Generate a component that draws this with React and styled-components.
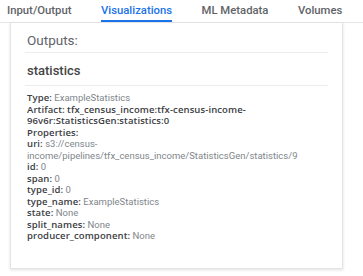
import React from "react";
import styled, { createGlobalStyle } from "styled-components";

const Global = createGlobalStyle`
  html, body { margin: 0; padding: 0; background: #fff; }
  body { font-family: Roboto, "Noto Sans", sans-serif; -webkit-font-smoothing: antialiased; }
`;

const Page = styled.div`
  width: 363px;
  height: 276px;
  overflow: hidden;
  background: #fff;
`;

const TabBar = styled.div`
  display: flex;
  gap: 29.5px;
  padding-left: 7px;
  height: 23px;
  box-sizing: border-box;
  border-bottom: 1px solid #e6e6e6;
`;

const Tab = styled.div`
  display: flex;
  align-items: center;
  height: 22px;
  box-sizing: border-box;
  padding-top: 1px;
  font-size: 11.3px;
  font-weight: 500;
  color: ${(p) => (p.$active ? "#1a73e8" : "#5f6368")};
  border-bottom: 2px solid ${(p) => (p.$active ? "#1a73e8" : "transparent")};
  white-space: nowrap;
`;

const Card = styled.div`
  margin: 0 20px 0 10px;
  height: 246px;
  box-sizing: border-box;
  border: 1px solid #e4e4e4;
  border-top: none;
  box-shadow: 0 1px 3px rgba(0, 0, 0, 0.12);
  padding: 0 14px;
`;

const Heading = styled.div`
  font-size: ${(p) => (p.$strong ? "13px" : "13.5px")};
  font-weight: ${(p) => (p.$strong ? 500 : 400)};
  color: ${(p) => (p.$strong ? "#444" : "#5f6368")};
  padding: ${(p) => p.$pad};
  border-bottom: 1px solid #ececec;
  line-height: 16px;
`;

const Props = styled.div`
  padding: 6px 2px 0 2px;
  font-size: 9.5px;
  line-height: 11.5px;
  color: #80868b;
`;

const Line = styled.div`
  overflow-wrap: break-word;
`;

const Key = styled.span`
  font-family: "Open Sans", Roboto, sans-serif;
  font-weight: 600;
  letter-spacing: 0.1px;
  color: #3c4043;
`;

const rows = [
  ["Type", "ExampleStatistics"],
  ["Artifact", "tfx_census_income:tfx-census-income-96v6r:StatisticsGen:statistics:0", true],
  ["Properties", ""],
  ["uri", "s3://census-income/pipelines/tfx_census_income/StatisticsGen/statistics/9"],
  ["id", "0"],
  ["span", "0"],
  ["type_id", "0"],
  ["type_name", "ExampleStatistics"],
  ["state", "None"],
  ["split_names", "None"],
  ["producer_component", "None"],
];

export default function App() {
  return (
    <Page>
      <Global />
      <TabBar>
        <Tab>Input/Output</Tab>
        <Tab $active>Visualizations</Tab>
        <Tab>ML Metadata</Tab>
        <Tab>Volumes</Tab>
      </TabBar>
      <Card>
        <Heading $pad="9px 0 4px 2px">Outputs:</Heading>
        <Heading $strong $pad="10px 0 6px 2px">statistics</Heading>
        <Props>
          {rows.map(([k, v, bold]) => (
            <Line key={k}>
              <Key>{k}:</Key>{" "}
              {bold ? <Key>{v}</Key> : v}
            </Line>
          ))}
        </Props>
      </Card>
    </Page>
  );
}
